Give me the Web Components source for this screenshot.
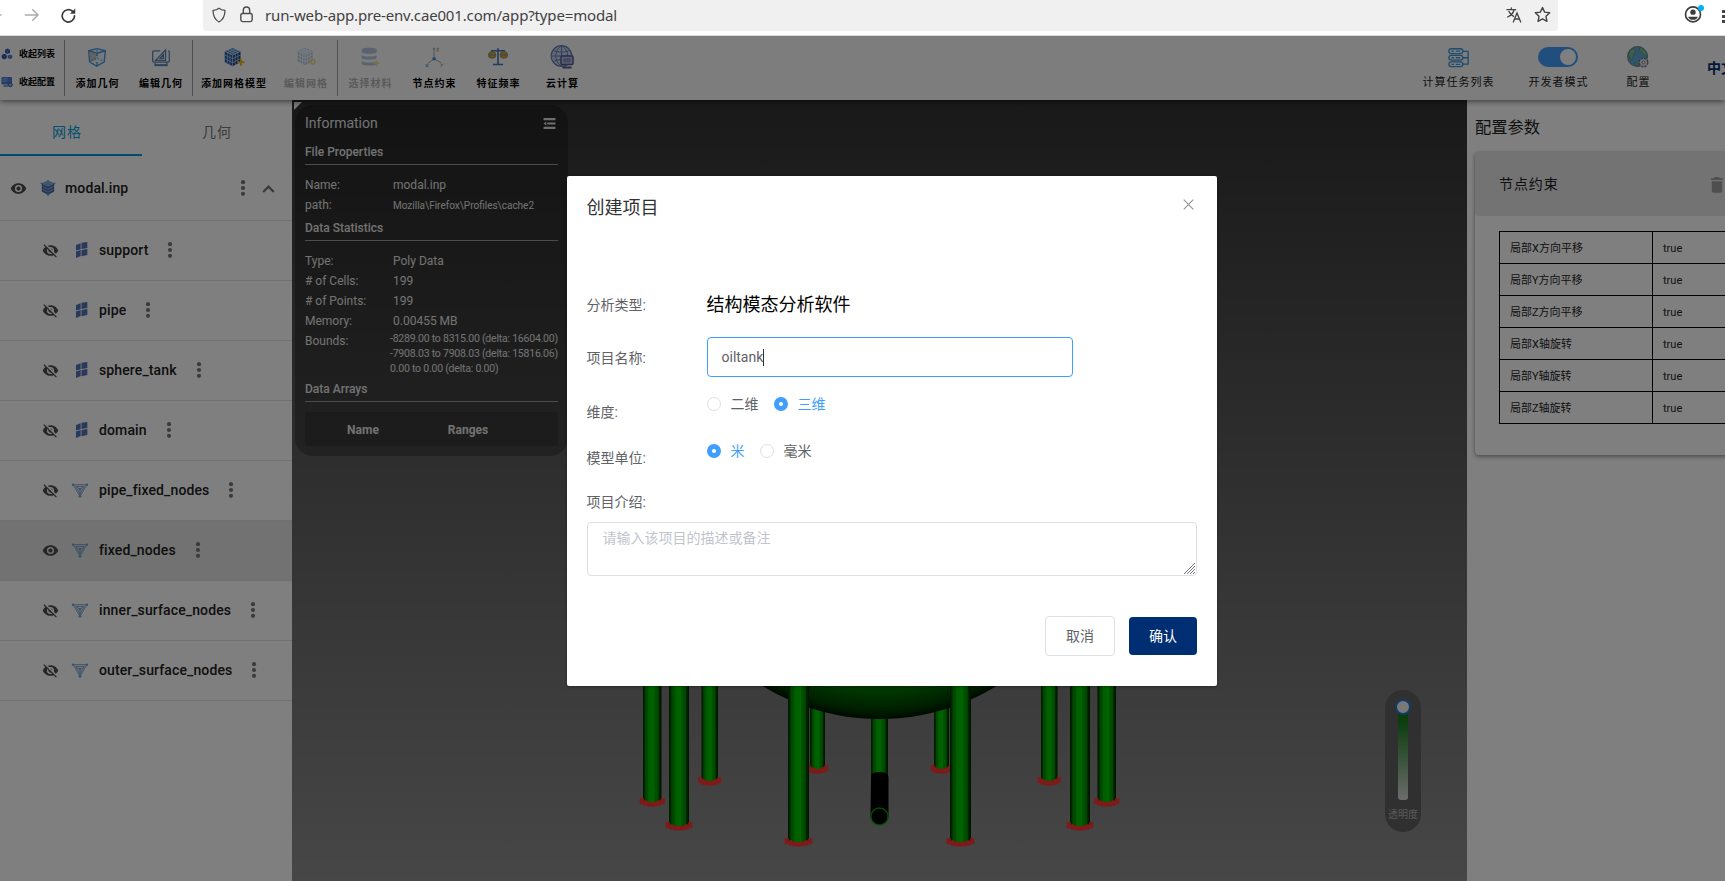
<!DOCTYPE html>
<html lang="zh-CN">
<head>
<meta charset="utf-8">
<title>CAE 模态分析</title>
<style>
html,body{margin:0;height:100%;overflow:hidden}
body{font-family:Roboto,"Noto Sans CJK SC",sans-serif;font-size:14px;color:#212121;background:#fff}
</style>
</head>
<body>
<cae-window></cae-window>
<script>
const MESH_LINES = 'M5 3.700l9 4V20.300M8 2.300l9 4V18.500M17 3.700l-9 4V20.300M14 2.300l-9 4V18.500M2 9.200l9 4.200 9-4.200M2 13.200l9 4.600 9-4.600M2 5l9 4 9-4M11 9v13';
const ICONS = {
  back:`<svg viewBox="0 0 24 24" fill="none" stroke="#b4b4b4" stroke-width="2"><path d="M22 12H5M12 5l-7 7 7 7"/></svg>`,
  forward:`<svg viewBox="0 0 24 24" fill="none" stroke="#aaa" stroke-width="2.2" stroke-linecap="round" stroke-linejoin="round"><path d="M2 12h19M13 4l8 8-8 8"/></svg>`,
  reload:`<svg viewBox="0 0 24 24" fill="none" stroke="#3c3c3c" stroke-width="2.4" stroke-linecap="round"><path d="M20.5 12.5A8.7 8.7 0 1 1 17.6 6"/><path d="M21.5 2v7.5H14z" fill="#3c3c3c" stroke="none"/></svg>`,
  shield:`<svg viewBox="0 0 24 24" fill="none" stroke="#4c4c4c" stroke-width="1.9" stroke-linejoin="round"><path d="M12 1.8c2.5 2.2 5.5 3 9 3.2C21 14 17.500 19.500 12 22.500 6.500 19.500 3 14 3 5c3.500-.2 6.500-1 9-3.200z"/></svg>`,
  lock:`<svg viewBox="0 0 24 24" fill="none" stroke="#4c4c4c" stroke-width="2"><rect x="4" y="10.500" width="16" height="11.500" rx="2.500"/><path d="M7.500 10.500V6a4.500 4.500 0 0 1 9 0v4.500"/></svg>`,
  translate:`<svg viewBox="0 0 24 24" fill="none" stroke="#444" stroke-width="2" stroke-linecap="round"><path d="M1.500 4h13M8 1.500V4M12 4.500c-1 4.500-5 8.500-9.500 10.500M4.500 7c1.500 3 4 5.500 7 7"/><path d="M11 22.500l5.500-13.500L22 22.500M13 18h7"/></svg>`,
  star:`<svg viewBox="0 0 24 24" fill="none" stroke="#444" stroke-width="2" stroke-linejoin="round"><path d="M12 2l3 6.700 7.200.8-5.300 5 1.400 7.200L12 18.100l-6.300 3.600 1.400-7.200-5.300-5 7.200-.8z"/></svg>`,
  account:`<svg viewBox="0 0 24 24"><circle cx="12" cy="12.500" r="10" fill="none" stroke="#3c3c3c" stroke-width="2.200"/><circle cx="12" cy="9.500" r="3.600" fill="#3c3c3c"/><path d="M5.500 15.500h13c-1 2.800-3.500 4.300-6.500 4.300s-5.500-1.500-6.500-4.300z" fill="#3c3c3c"/></svg>`,
  cubes:`<svg viewBox="0 0 24 24"><path d="M13 1l5 2.500v6L13 12 8 9.500v-6z" fill="#3157b5"/><path d="M6.500 11.500l5 2.500v6l-5 3-5-3v-6z" fill="#284ba5"/><path d="M18 13l4.500 2v5L18 22l-4.500-2v-5z" fill="#4a75cf"/><path d="M8 3.500L13 6l5-2.500M13 6v6M1.500 14l5 2.500 5-2.500M6.500 16.500V23M13.500 15l4.500 2 4.500-2" stroke="#7da0e2" fill="none"/></svg>`,
  panel:`<svg viewBox="0 0 24 24"><rect x="1" y="2" width="21" height="15" rx="1.500" fill="#4c7dce"/><path d="M3.500 5h9M3.500 8h11M3.500 11h8" stroke="#95bcf4" stroke-width="1.500"/><path d="M5 20h9" stroke="#4269ad" stroke-width="2.500"/><circle cx="18.500" cy="17.500" r="4" fill="#8eb5e8" stroke="#35589d" stroke-width="2"/></svg>`,
  addGeo:`<svg viewBox="0 0 24 24" stroke="#4a9ae0" stroke-width="1.700" stroke-linejoin="round"><path d="M2 4.500L12 2l10 2.500-1.300 13.500-9 5-8.500-5z" fill="#eef4f8"/><path d="M3 6l8 2v7.500L4 17.500z" fill="#c9c2bc" stroke="none"/><path d="M2 4.500L12 7.500l10-3M12 7.500V11M12 18v5" fill="none"/><path d="M4 17l8-4 8 4M12 3v10" fill="none" stroke-width="1" stroke-dasharray="3 1.500"/></svg>`,
  editGeo:`<svg viewBox="0 0 24 24" fill="none" stroke="#5b84b4" stroke-width="1.500"><path d="M11 4.500H3.500Q2 4.500 2 6v10.500Q2 18 3.500 18h17q1.500 0 1.500-1.500V6q0-1.500-1.500-1.500M5 19v2.500h14V19"/><path d="M5.500 16L17.500 3.500V16zM11 13.500l4-4.500v4.500z"/><path d="M4 22h16" stroke-width="2"/></svg>`,
  addMesh:`<svg viewBox="0 0 24 24"><path d="M2 5l9 4v13l-9-5z" fill="#1c55a8"/><path d="M20 5l-9 4v13l9-5z" fill="#14468f"/><path d="M11 1l9 4-9 4-9-4z" fill="#3b8ad0"/><path d="${MESH_LINES}" stroke="#cfdbe8" stroke-width=".8" fill="none"/><path d="M20.500 13.500v8M16.500 17.500h8" stroke="#f0b71d" stroke-width="2.200"/></svg>`,
  editMesh:`<svg viewBox="0 0 24 24" opacity=".45"><path d="M11 1l9 4v12l-9 5-9-5V5z" fill="#6a94cf"/><path d="M11 1l9 4-9 4-9-4z" fill="#8ab8e6"/><path d="${MESH_LINES}" stroke="#fff" stroke-width="1" fill="none"/><circle cx="20" cy="17.500" r="2.800" fill="none" stroke="#f0b71d" stroke-width="2"/></svg>`,
  material:`<svg viewBox="0 0 24 24" opacity=".42"><g fill="#5a83c4"><path d="M2 3c0-3 18-3 18 0v3c0 3-18 3-18 0z"/><path d="M2 10c4 2 14 2 18 0v3c0 3-18 3-18 0z"/><path d="M2 17c4 2 14 2 18 0v3c0 3-18 3-18 0z"/></g><path d="M20 16v7M16.500 19.500h7" stroke="#f0b71d" stroke-width="2"/></svg>`,
  axes:`<svg viewBox="0 0 24 24" fill="none" stroke="#a2a5aa" stroke-width="1.100"><path d="M11.500 13.500V1M11.500 13.500L4 19M11.500 13.500l8 4.500"/><path d="M10 3l1.500-2L13 3M14.500 1.500h2.500l-2.500 3h2.500M19 19l1.500 2L22 19M20.500 21l-1 2"/><path d="M2 19.500l3 3.500M5 19.500L2 23" stroke="#5b9fd4"/><circle cx="11.500" cy="13.500" r="2" fill="#3f96dc" stroke="none"/></svg>`,
  scale:`<svg viewBox="0 0 24 24"><path d="M12 1.500v19M6 21h12M3.500 4.500h17" stroke="#4673ba" stroke-width="1.900" fill="none"/><path d="M5 5L1 12h8zM19 5l-4 7h8z" stroke="#5c7fb4" fill="none"/><path d="M.5 9.500q0-4 4.500-4t4.500 4-4.500 4-4.500-4M14.500 9.500q0-4 4.500-4t4.500 4-4.500 4-4.500-4" fill="#dcaa1e" stroke="#6f86a4" stroke-width=".9"/><path d="M.5 9.500h9M14.500 9.500h9" stroke="#6f86a4"/></svg>`,
  cloud:`<svg viewBox="0 0 24 24"><circle cx="11.500" cy="11" r="10.300" fill="#c3d3ea" stroke="#6a7eb4" stroke-width="1.200"/><path d="M1 11h20M11.500 1v20M3.500 5.500c4 2 12 2 16 0M3.500 16.500c4-2 7-2 9-2M11 1C4 6 4 16 11 21M12 1c5 3 6.500 8 5 12" fill="none" stroke="#6a7eb4"/><rect x="11" y="11" width="12" height="8.500" rx="1" fill="#b7bfdd" stroke="#545a94" stroke-width="1.500"/><rect x="13.300" y="13.300" width="7.400" height="4" fill="#8990c0"/><path d="M12.500 22.500h9" stroke="#545a94" stroke-width="2"/></svg>`,
  tasks:`<svg viewBox="0 0 24 24" fill="none" stroke="#3f97dc" stroke-width="1.500"><rect x="1" y="2" width="16" height="5.500" rx="2.700"/><rect x="1" y="9.500" width="16" height="5.500" rx="2.700"/><rect x="1" y="17" width="16" height="5.500" rx="2.700"/><path d="M4 4.750h3M9 4.750h5M4 12.250h3M9 12.250h5M4 19.750h3M9 19.750h5M17 5h6v14.500h-6M17 12.250h6"/></svg>`,
  globe:`<svg viewBox="0 0 24 24"><circle cx="11.500" cy="11.500" r="10.800" fill="#5ea8d7" stroke="#7a8299" stroke-width="1.200"/><path d="M5 3c4 0 5 2 3 5s-1 6-3 7c-3-1-5-8 0-12zM14 1.500c5 1 8 5 8 9-3 1-4-2-6-3s-3-3-2-6zM8 19c2-2 4 0 4 3-2 0-3-1-4-3z" fill="#7cbf99" stroke="#5b8d80"/><circle cx="18" cy="18" r="4.700" fill="#e9ebf0" stroke="#6b7085" stroke-width="1.600" stroke-dasharray="2.500 1.200"/><circle cx="18" cy="18" r="1.700" fill="#fff" stroke="#6b7085"/></svg>`,
  eye:`<svg viewBox="0 0 24 24" fill="#4c4c4c"><path d="M12,9A3,3 0 0,0 9,12A3,3 0 0,0 12,15A3,3 0 0,0 15,12A3,3 0 0,0 12,9M12,17A5,5 0 0,1 7,12A5,5 0 0,1 12,7A5,5 0 0,1 17,12A5,5 0 0,1 12,17M12,4.500C7,4.500 2.730,7.610 1,12C2.730,16.390 7,19.500 12,19.500C17,19.500 21.270,16.390 23,12C21.270,7.610 17,4.500 12,4.500Z"/></svg>`,
  eyeOff:`<svg viewBox="0 0 24 24" fill="#4c4c4c"><path d="M11.830,9L15,12.160C15,12.110 15,12.050 15,12A3,3 0 0,0 12,9C11.940,9 11.890,9 11.830,9M7.530,9.800L9.080,11.350C9.030,11.560 9,11.770 9,12A3,3 0 0,0 12,15C12.220,15 12.440,14.970 12.650,14.920L14.200,16.470C13.530,16.800 12.790,17 12,17A5,5 0 0,1 7,12C7,11.210 7.200,10.470 7.530,9.800M2,4.270L4.280,6.550L4.730,7C3.080,8.300 1.780,10 1,12C2.730,16.390 7,19.500 12,19.500C13.550,19.500 15.030,19.200 16.380,18.660L16.810,19.080L19.730,22L21,20.730L3.270,3M12,7A5,5 0 0,1 17,12C17,12.640 16.870,13.260 16.640,13.820L19.570,16.750C21.070,15.500 22.270,13.860 23,12C21.270,7.610 17,4.500 12,4.500C10.600,4.500 9.260,4.750 8,5.200L10.170,7.350C10.740,7.130 11.350,7 12,7Z"/></svg>`,
  cube:`<svg viewBox="0 0 22 23.500"><path d="M11 1l9 4v12l-9 5-9-5V5z" fill="#2f5aa6"/><path d="M11 1l9 4-9 4-9-4z" fill="#6a93cc"/><path d="${MESH_LINES}" stroke="#b4c6de" stroke-width=".8" fill="none"/><g fill="#45b4dc"><circle cx="11" cy="1.500" r="1.400"/><circle cx="1.500" cy="5" r="1.500"/><circle cx="20.500" cy="5" r="1.500"/><circle cx="11" cy="22" r="1.600"/></g></svg>`,
  grid:`<svg viewBox="0 0 24 24" fill="#5273b8"><path d="M6 4.500l7-2.800v9L6 12.800zM14.300 1.300L23 0v9l-8.700 1.500zM6 14.300l7-2.200v9L6 24zM14.300 12L23 10.600v8.800l-8.700 1.800z"/></svg>`,
  tetra:`<svg viewBox="0 0 24 24" fill="none" stroke="#7590bf" stroke-width="1.200"><path d="M2 4h20L12 22zM5.500 6.500h13l-6.500 11.500zM12 11V22M7 7l5 4 5-4"/><g fill="#45b4dc" stroke="none"><circle cx="1.500" cy="4" r="1.800"/><circle cx="22.500" cy="4" r="1.800"/><circle cx="12" cy="21.500" r="2"/><circle cx="12" cy="10.800" r="2"/></g></svg>`,
  dots:`<svg viewBox="0 0 24 24" fill="#777"><circle cx="12" cy="3.200" r="3.100"/><circle cx="12" cy="12" r="3.100"/><circle cx="12" cy="20.800" r="3.100"/></svg>`,
  up:`<svg viewBox="0 0 24 24" fill="none" stroke="#757575" stroke-width="3.400"><path d="M3.500 17.500l8.500-8.500 8.500 8.500"/></svg>`,
  fold:`<svg viewBox="0 0 24 24" fill="#ddd"><path d="M1 2h22v4H1zM8 10h15v4H8zM1 18h22v4H1zM1 12l5-3.800v7.600z"/></svg>`,
  trash:`<svg viewBox="0 0 12 16" fill="#9e9e9e"><path d="M0 1.200h3L4 0h4l1 1.200h3v1.900H0zM.8 4.200h10.400v9.800q0 1.700-1.700 1.700h-7q-1.700 0-1.700-1.700z"/></svg>`,
  close:`<svg viewBox="0 0 12 12" fill="none" stroke="#909399" stroke-width="1.200"><path d="M.8.8l10.400 10.400M11.200.8L.8 11.200"/></svg>`
};

const define = (tag, css, html) => customElements.define(tag, class extends HTMLElement {
  constructor(){
    super();
    const t = document.createElement('template');
    t.innerHTML = `<style>*{box-sizing:border-box}${css}</style>` + (typeof html === 'function' ? html(this) : html);
    this.attachShadow({mode:'open'}).append(t.content.cloneNode(true));
  }
});

define('cae-icon', `:host{display:block;flex:none;width:var(--s,16px);height:var(--s,16px)}svg{display:block;width:100%;height:100%;overflow:visible}`,
  el => ICONS[el.getAttribute('name')]);

define('browser-bar', `
:host{display:flex;align-items:flex-start;height:36px;background:#fff;border-bottom:1px solid #dcdcdc;overflow:hidden}
.nav{display:flex;align-items:center;width:203px;height:30px;flex:none}
.url{display:flex;align-items:center;width:1356px;height:31px;background:#f0f0f1;border-radius:0 0 4px 4px;padding:0 7px 2px 8px}
.url b{font:400 15px/20px "Noto Sans",sans-serif;color:#424242;letter-spacing:-.155px;flex:1;margin-left:10px;white-space:nowrap}
.acct{position:relative;margin:5px 0 0 126px}
.acct i{position:absolute;right:-2px;top:0;width:6px;height:6px;border-radius:50%;background:#00b3f4}
.more{width:3px;margin:10px 0 0 20px;height:13px;flex:none;border-top:3px solid #444;border-bottom:3px solid #444;background:linear-gradient(#444,#444) 0 2px/3px 3px no-repeat}
`, `<div class="nav"><cae-icon name="back" style="--s:16px;margin-left:-13px"></cae-icon><cae-icon name="forward" style="--s:16px;margin-left:21px"></cae-icon><cae-icon name="reload" style="--s:17px;margin-left:20px"></cae-icon></div>
<div class="url"><cae-icon name="shield" style="--s:16px"></cae-icon><cae-icon name="lock" style="--s:17px;margin-left:11px"></cae-icon><b>run-web-app.pre-env.cae001.com/app?type=modal</b><cae-icon name="translate" style="--s:16px;margin-right:12px"></cae-icon><cae-icon name="star" style="--s:17px;"></cae-icon></div>
<div class="acct"><cae-icon name="account" style="--s:18px"></cae-icon><i></i></div><div class="more"></div>`);

define('tool-item', `
:host{display:flex;flex-direction:column;align-items:center;width:var(--w,64px);flex:none;padding-top:10px;font:700 10px/14px Roboto,"Noto Sans CJK SC",sans-serif;letter-spacing:1px;color:#000;white-space:nowrap}
:host([off]){color:#b4b4b4}
:host([side]){font-weight:400;font-size:11px;color:#222}
.i{height:22px;display:flex;align-items:center}.t{margin:9px -1px 0 0}
:host([side]) .t{margin-top:8px}
`, el => `<div class="i">${el.hasAttribute('toggle') ? '<slot name="ctl"></slot>' : `<cae-icon name="${el.getAttribute('icon')}" style="--s:${el.getAttribute('s')||20}px"></cae-icon>`}</div><div class="t"><slot></slot></div>`);

define('el-switch', `:host{display:flex;justify-content:flex-end;align-items:center;width:40px;height:20px;border-radius:10px;background:#409eff;padding:2px}i{width:16px;height:16px;border-radius:50%;background:#fff}`, `<i></i>`);

define('tool-bar', `
:host{display:flex;height:64px;background:#fafafa;box-shadow:0 2px 5px rgba(0,0,0,.45);position:relative;z-index:2;overflow:visible}
.fold{width:64px;flex:none;padding:11px 0 0 1px;display:flex;flex-direction:column;gap:14px;font-weight:700;font-size:9px;color:#000;line-height:14px}
.fold div{display:flex;align-items:center;gap:6px;white-space:nowrap}
.sep{width:1px;height:56px;margin-top:4px;background:#a0a0a0;flex:none}
.lang{font:700 14px/20px Roboto,"Noto Sans CJK SC",sans-serif;color:#002e73;margin:22px 0 0 39px;width:18px;white-space:nowrap}
`, `<div class="fold"><div><cae-icon name="cubes" style="--s:12px"></cae-icon>收起列表</div><div><cae-icon name="panel" style="--s:12px"></cae-icon>收起配置</div></div>
<div class="sep"></div><tool-item icon="addGeo">添加几何</tool-item><tool-item icon="editGeo" style="--w:63px">编辑几何</tool-item>
<div class="sep"></div><tool-item icon="addMesh" s="21" style="--w:81px">添加网格模型</tool-item><tool-item icon="editMesh" s="20" off style="--w:63px">编辑网格</tool-item>
<div class="sep"></div><tool-item icon="material" off style="--w:64px">选择材料</tool-item><tool-item icon="axes" s="21">节点约束</tool-item><tool-item icon="scale">特征频率</tool-item><tool-item icon="cloud" s="24">云计算</tool-item>
<div style="flex:1"></div>
<tool-item side icon="tasks" s="21" style="--w:100px">计算任务列表</tool-item><tool-item side toggle style="--w:100px"><el-switch slot="ctl"></el-switch>开发者模式</tool-item><tool-item side icon="globe" s="22" style="--w:60px">配置</tool-item>
<div class="lang">中文</div>`);

define('tree-row', `
:host{display:flex;align-items:center;height:60px;padding:0 0 1px 41.5px;border-bottom:1px solid #e0e0e0;font-weight:500;color:#212121;font-size:14px;letter-spacing:.12px}
:host([root]){height:65px;padding:0 0 0 9.5px}
:host([active]){background:#e4e4e4}
.k{margin-left:14.500px;margin-right:11px}:host([root]) .k{margin:0 9px 0 14.500px}
.d{margin-left:14px}:host([root]) .d{margin-left:auto;margin-right:10px}
.u{margin-right:16.500px}
`, el => `<cae-icon name="${el.hasAttribute('shown')?'eye':'eyeOff'}" style="--s:17px;margin-right:-1px"></cae-icon><cae-icon class="k" name="${el.getAttribute('icon')}" style="--s:16px"></cae-icon><slot></slot><cae-icon class="d" name="dots"></cae-icon>${el.hasAttribute('root')?'<cae-icon class="u" name="up" style="--s:15px"></cae-icon>':''}`);

define('mesh-sidebar', `
:host{display:block;width:292px;flex:none;background:#fff}
.tabs{display:flex;height:56px}
.tabs div{flex:none;width:142px;padding-right:8px;text-align:center;line-height:65px;letter-spacing:1px;color:#777;height:56px;font-size:14px}
.tabs .on{color:#00a0dc;border-bottom:2px solid #009be0}
.tabs div+div{padding:0;width:150px}
`, `<div class="tabs"><div class="on">网格</div><div>几何</div></div>
<tree-row root shown icon="cube">modal.inp</tree-row>
<tree-row icon="grid">support</tree-row><tree-row icon="grid">pipe</tree-row><tree-row icon="grid">sphere_tank</tree-row><tree-row icon="grid">domain</tree-row>
<tree-row icon="tetra">pipe_fixed_nodes</tree-row><tree-row icon="tetra" shown active>fixed_nodes</tree-row><tree-row icon="tetra">inner_surface_nodes</tree-row><tree-row icon="tetra">outer_surface_nodes</tree-row>`);

define('info-panel', `
:host{display:block;position:absolute;left:3px;top:5px;width:273px;height:351px;border-radius:18px;background:rgba(0,0,0,.25);padding:8px 10px;color:#e4e4e4;font-size:12px;line-height:20px}
.h{display:flex;justify-content:space-between;align-items:center;font-size:14px;padding-right:2px}
h4{margin:0 0 10px;font-size:12px;font-weight:500;line-height:20px;height:23px;border-bottom:1px solid #999;width:253px}
dl{margin:0;display:grid;grid-template-columns:88px 1fr}dt,dd{margin:0;height:20px;white-space:nowrap}
.s{font-size:10px;padding-top:1px}.b{line-height:15px;height:45px;margin:0 0 0 -3px;font-size:10.500px;letter-spacing:-.22px}
table{width:253px;height:34px;background:rgba(0,0,0,.15);border-spacing:0;border-radius:2px}th{font-weight:700;padding:1px 0 0}
`, `<div class="h">Information<cae-icon name="fold" style="--s:13px"></cae-icon></div>
<h4 style="margin-top:9px">File Properties</h4>
<dl><dt>Name:</dt><dd>modal.inp</dd><dt>path:</dt><dd class="s">Mozilla\\Firefox\\Profiles\\cache2</dd></dl>
<h4 style="margin-top:3px">Data Statistics</h4>
<dl><dt>Type:</dt><dd>Poly Data</dd><dt># of Cells:</dt><dd>199</dd><dt># of Points:</dt><dd>199</dd><dt>Memory:</dt><dd>0.00455 MB</dd><dt>Bounds:</dt><dd class="b">-8289.00 to 8315.00 (delta: 16604.00)<br>-7908.03 to 7908.03 (delta: 15816.06)<br>0.00 to 0.00 (delta: 0.00)</dd></dl>
<h4 style="margin-top:3px">Data Arrays</h4>
<table><tr><th style="width:116px">Name</th><th style="width:94px">Ranges</th><th></th></tr></table>`);

define('opacity-slider', `
:host{display:flex;flex-direction:column;align-items:center;position:absolute;left:1093px;top:590px;width:36px;height:142px;border-radius:18px;background:#616161;padding-top:9px;color:#b2b2b2;font-size:10px;white-space:nowrap}
i{width:16px;height:16px;border-radius:50%;background:#f3f3f3;border:2px solid #2676cd;z-index:1;flex:none}
b{width:10px;height:95px;margin-top:-10px;border-radius:0 0 3px 3px;background:linear-gradient(#08780a,#1f7d24 20%,#d8d8d8)}
span{line-height:14px;margin-top:8px}
`, `<i></i><b></b><span>透明度</span>`);

const legs = () => {
  const L = [[934,949,690,769],[643,661.5,680,802],[701.5,718,680,781],[669,689,680,826],[788,809,680,842]];
  const one = ([a,b,t,e]) => {
    const w=b-a, n=6, s=(w+2.6)/n;
    let cap='';
    for(let i=0;i<=n;i++){const u=i/n*2-1, m=1-u*u; cap+=`<rect x="${a-3.4+i*s}" y="${e-4+4*m}" width="4.200" height="${6.2-1.400*m}" rx="1.200"/>`;}
    return `<rect x="${a}" y="${t}" width="${w}" height="${e-t}" fill="url(#leg)"/><g fill="#fa3434">${cap}</g>`;
  };
  const mirror = ([a,b,t,e]) => [1759-b,1759-a,t,e];
  return {back: one(L[0])+one(mirror(L[0])), front: L.slice(1).map(l=>one(l)+one(mirror(l))).join('')};
};

define('render-view', `
:host{display:block;position:relative;width:1175px;flex:none;background:linear-gradient(#323232,#8e8e8e);overflow:hidden}
svg.scene{display:block;width:1175px;height:781px}
.corner{position:absolute;left:2px;top:2px;width:0;height:0;border-top:8px solid #eee;border-right:8px solid transparent}
`, () => { const g = legs(); return `<svg class="scene" viewBox="292 100 1175 781"><defs>
<linearGradient id="leg"><stop offset="0" stop-color="#022c02"/><stop offset=".1" stop-color="#025502"/><stop offset=".14" stop-color="#008c00"/><stop offset=".28" stop-color="#009a00"/><stop offset=".3" stop-color="#00b900"/><stop offset=".6" stop-color="#00ca00"/><stop offset=".62" stop-color="#00ad00"/><stop offset=".82" stop-color="#009000"/><stop offset=".88" stop-color="#024c02"/><stop offset="1" stop-color="#022002"/></linearGradient>
<radialGradient id="ball" gradientUnits="userSpaceOnUse" cx="879.500" cy="495" r="224"><stop offset=".75" stop-color="#008000"/><stop offset=".88" stop-color="#006c00"/><stop offset=".96" stop-color="#003f00"/><stop offset="1" stop-color="#001400"/></radialGradient></defs>
${g.back}<circle cx="879.500" cy="495" r="224" fill="url(#ball)"/>
<rect x="871" y="719" width="17" height="58" fill="url(#leg)"/>
<path d="M871 777q0-5 8.500-5t9 5v41h-18z" fill="#000"/><circle cx="879.500" cy="816.500" r="8.500" fill="#000" stroke="#00a000" stroke-width="1.300"/>
${g.front}</svg><div class="corner"></div><info-panel></info-panel><opacity-slider></opacity-slider>`; });

define('config-panel', `
:host{display:block;flex:none;width:258px;background:#fff;padding-left:8px;overflow:hidden}
.t{font-size:16.300px;line-height:24px;padding-top:16px;height:52px}
.card{width:300px;height:303px;border-radius:4px;box-shadow:0 2px 4px rgba(0,0,0,.35),0 0 3px rgba(0,0,0,.15)}
.hd{display:flex;align-items:center;justify-content:space-between;height:64px;background:#e6e6e6;border-radius:4px;padding:0 52px 2px 24px;font-size:14px;letter-spacing:.9px}
table{border-collapse:collapse;margin:15px 0 0 24px;font-size:11px;table-layout:fixed;width:260px}
td{border:1px solid #000;height:32px;padding:2px 0 0 10px;line-height:17px;color:#262626}
td:first-child{width:153px}
`, `<div class="t">配置参数</div><div class="card"><div class="hd">节点约束<cae-icon name="trash" style="width:12px;height:16px;margin-top:3px"></cae-icon></div>
<table>${['X方向平移','Y方向平移','Z方向平移','X轴旋转','Y轴旋转','Z轴旋转'].map(s=>`<tr><td>局部${s}</td><td>true</td></tr>`).join('')}</table></div>`);

define('el-radio', `
:host{display:inline-flex;align-items:center;gap:10px;margin-right:15px;color:#606266}
i{width:14px;height:14px;border-radius:50%;border:1px solid #dcdfe6;background:#fff}
:host([checked]){color:#409eff}:host([checked]) i{border:5px solid #409eff}
`, `<i></i><slot></slot>`);

define('form-row', `:host{display:flex;height:var(--h)}.l{width:120px;flex:none;padding-top:var(--lp,0)}.l,.c{line-height:20px}.c{display:flex;flex:1;padding-top:var(--cp,0);align-items:flex-start}`,
 el => `<div class="l">${el.getAttribute('label')}</div><div class="c"><slot></slot></div>`);

define('project-dialog', `
:host{display:block;position:absolute;left:567px;top:140px;width:650px;height:510px;background:#fff;border-radius:2px;box-shadow:0 1px 3px rgba(0,0,0,.3);padding:0 20px 0 19.5px;color:#606266;font-size:14px}
.h{display:flex;justify-content:space-between;align-items:center;height:60px;font-size:18px;color:#303133;margin-bottom:38px}
.v{font-size:18px;color:#000;line-height:24px}
.in{display:flex;align-items:center;width:366px;height:40px;border:1px solid #409eff;border-radius:4px;padding-left:14px}
.in i{width:1px;height:17px;background:#333}
.ta{position:relative;height:54px;border:1px solid #dcdfe6;border-radius:4px;padding:5px 15px;line-height:20px;color:#c0c4cc}
.ta svg{position:absolute;right:1px;bottom:1px}
.f{display:flex;justify-content:flex-end;align-items:center;gap:14px;margin-top:40px}
.f div{width:70px;height:40px;border:1px solid #dcdfe6;border-radius:4px;text-align:center;line-height:38px}
.f .ok{width:68px;height:38px;background:#002e73;border:0;color:#fff}
`, `<div class="h">创建项目<cae-icon name="close" style="--s:11px;margin:-3px 3px 0 0"></cae-icon></div>
<form-row label="分析类型:" style="--h:63px;--lp:21px;--cp:19px"><span class="v">结构模态分析软件</span></form-row>
<form-row label="项目名称:" style="--h:41px;--lp:11px"><div class="in">oiltank<i></i></div></form-row>
<form-row label="维度:" style="--h:50px;--lp:24px;--cp:16px"><el-radio>二维</el-radio><el-radio checked>三维</el-radio></form-row>
<form-row label="模型单位:" style="--h:46px;--lp:20px;--cp:13px"><el-radio checked>米</el-radio><el-radio>毫米</el-radio></form-row>
<form-row label="项目介绍:" style="--h:48px;--lp:18px"></form-row>
<div class="ta">请输入该项目的描述或备注<svg width="11" height="11" stroke="#777" stroke-width="1"><path d="M0 11L11 0M3 11l8-8M6 11l5-5M9 11l2-2"/></svg></div>
<div class="f"><div>取消</div><div class="ok">确认</div></div>`);

define('cae-app', `
:host{display:flex;flex-direction:column;position:relative;flex:1;min-height:0;overflow:hidden}
.main{display:flex;flex:1;min-height:0}
.mask{position:absolute;inset:0;background:rgba(0,0,0,.5);z-index:5}
project-dialog{z-index:6}
`, `<tool-bar></tool-bar><div class="main"><mesh-sidebar></mesh-sidebar><render-view></render-view><config-panel></config-panel></div><div class="mask"></div><project-dialog></project-dialog>`);

define('cae-window', `:host{display:flex;flex-direction:column;width:1725px;height:881px;overflow:hidden}`, `<browser-bar></browser-bar><cae-app></cae-app>`);
</script>
</body>
</html>
